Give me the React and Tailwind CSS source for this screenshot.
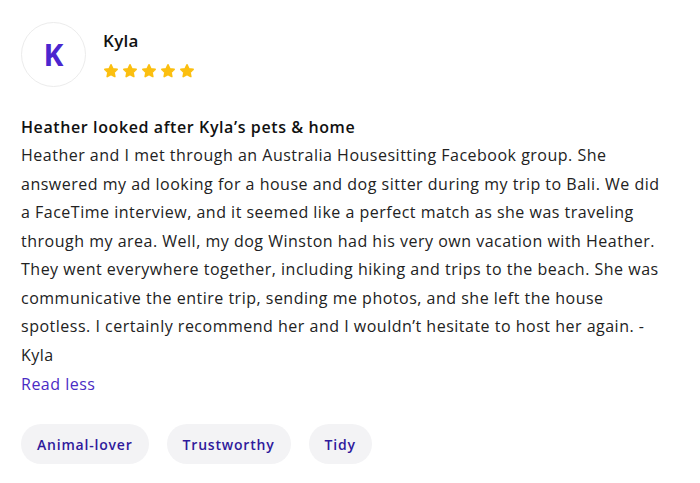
import React from "react";

const lines = [
  "Heather and I met through an Australia Housesitting Facebook group. She",
  "answered my ad looking for a house and dog sitter during my trip to Bali. We did",
  "a FaceTime interview, and it seemed like a perfect match as she was traveling",
  "through my area. Well, my dog Winston had his very own vacation with Heather.",
  "They went everywhere together, including hiking and trips to the beach. She was",
  "communicative the entire trip, sending me photos, and she left the house",
  "spotless. I certainly recommend her and I wouldn\u2019t hesitate to host her again. -",
  "Kyla",
];

const tags = ["Animal-lover", "Trustworthy", "Tidy"];

// Star with rounded points
const Star = () => (
  <svg width="16" height="16" viewBox="0 0 24 24" fill="#fbbf10" stroke="#fbbf10" strokeWidth="2.5" strokeLinejoin="round">
    <path d="M12 2.8l2.8 5.9 6.4.8-4.7 4.4 1.2 6.4L12 17.2l-5.7 3.1 1.2-6.4-4.7-4.4 6.4-.8z" />
  </svg>
);

export default function App() {
  return (
    <div
      className="w-[700px] h-[483px] bg-white text-[#1c1c1c]"
      style={{ fontFamily: '"Open Sans", "Noto Sans", sans-serif' }}
    >
      <div className="pl-[21px] pt-[22px]">
        {/* Header */}
        <div className="flex items-start">
          <div className="w-[65px] h-[65px] rounded-full border border-[#ececec] flex items-center justify-center shrink-0">
            <span className="text-[30px] font-bold text-[#4b26cf] leading-none">K</span>
          </div>
          <div className="ml-[17px] pt-[8px]">
            <div className="text-[17px] font-semibold leading-[22px] text-[#111] tracking-[0.3px]">Kyla</div>
            <div className="flex gap-[3px] mt-[11px]">
              <Star />
              <Star />
              <Star />
              <Star />
              <Star />
            </div>
          </div>
        </div>

        {/* Review */}
        <div className="mt-[26px]">
          <div className="text-[16px] font-semibold leading-[28px] text-[#111] tracking-[0.6px]">
            Heather looked after Kyla&rsquo;s pets &amp; home
          </div>
          <div className="text-[16px] leading-[28.5px] text-[#222] tracking-[0.5px]">
            {lines.map((l, i) => (
              <div key={i} className="whitespace-nowrap">{l}</div>
            ))}
          </div>
          <button className="text-[16px] leading-[28px] text-[#4a2bc4] tracking-[0.5px] mt-[1px]">Read less</button>
        </div>

        {/* Tags */}
        <div className="flex gap-[18px] mt-[26px]">
          {tags.map((t) => (
            <span
              key={t}
              className="h-[40px] px-[16px] rounded-full bg-[#f3f3f5] text-[14px] font-semibold text-[#2f1a9c] tracking-[0.8px] flex items-center"
            >
              {t}
            </span>
          ))}
        </div>
      </div>
    </div>
  );
}
